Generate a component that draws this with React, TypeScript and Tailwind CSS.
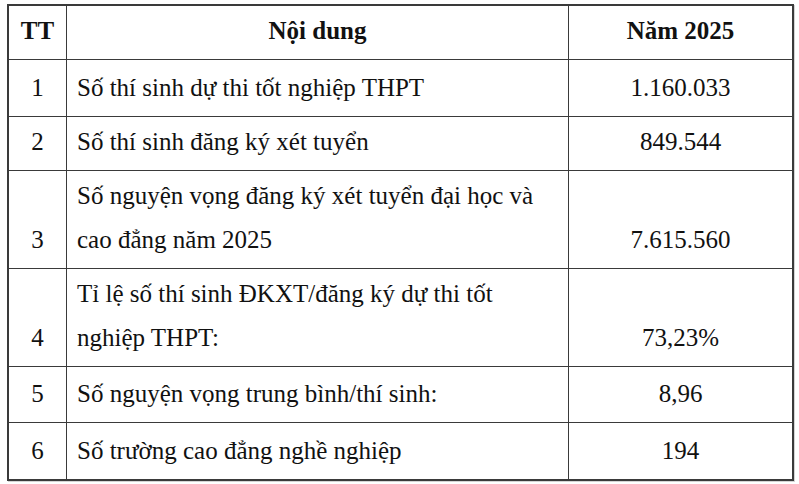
const rows = [
  { tt: "1", lines: ["Số thí sinh dự thi tốt nghiệp THPT"], value: "1.160.033", h: "h-[57px]" },
  { tt: "2", lines: ["Số thí sinh đăng ký xét tuyển"], value: "849.544", h: "h-[54px]" },
  {
    tt: "3",
    lines: ["Số nguyện vọng đăng ký xét tuyển đại học và", "cao đẳng năm 2025"],
    value: "7.615.560",
    h: "h-[98px]",
  },
  {
    tt: "4",
    lines: ["Tỉ lệ số thí sinh ĐKXT/đăng ký dự thi tốt", "nghiệp THPT:"],
    value: "73,23%",
    h: "h-[98px]",
  },
  { tt: "5", lines: ["Số nguyện vọng trung bình/thí sinh:"], value: "8,96", h: "h-[56px]" },
  { tt: "6", lines: ["Số trường cao đẳng nghề nghiệp"], value: "194", h: "h-[56px]" },
];

export default function App() {
  return (
    <div
      className="w-[799px] h-[484px] bg-white pl-[7px] pt-[4px] text-[#111] text-[25px] leading-[44px]"
      style={{ fontFamily: '"Liberation Serif", "Times New Roman", serif' }}
    >
      <div className="w-[787px] border-2 border-[#3a3a3a] shadow-[1px_1px_0_#d4d4d4]">
        {/* header */}
        <div className="grid grid-cols-[58px_502px_1fr] h-[54px] border-b border-[#3a3a3a] font-bold">
          <div className="flex items-end justify-center pb-[6px] border-r border-[#3a3a3a]">TT</div>
          <div className="flex items-end justify-center pb-[6px] border-r border-[#3a3a3a]">Nội dung</div>
          <div className="flex items-end justify-center pb-[6px]">Năm 2025</div>
        </div>

        {rows.map((r, i) => (
          <div
            key={r.tt}
            className={`grid grid-cols-[58px_502px_1fr] ${r.h} ${
              i < rows.length - 1 ? "border-b border-[#3a3a3a]" : ""
            }`}
          >
            <div className="flex items-end justify-center pb-[6px] border-r border-[#3a3a3a]">{r.tt}</div>
            <div className="flex flex-col justify-end pb-[6px] pl-[10px] border-r border-[#3a3a3a]">
              {r.lines.map((l) => (
                <div key={l} className="whitespace-nowrap">
                  {l}
                </div>
              ))}
            </div>
            <div className="flex items-end justify-center pb-[6px]">{r.value}</div>
          </div>
        ))}
      </div>
    </div>
  );
}
